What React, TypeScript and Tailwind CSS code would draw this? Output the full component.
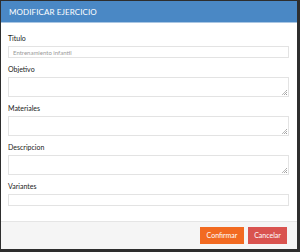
import React from 'react';

const fieldClass =
  'block w-full border border-[#e3e3e3] bg-white rounded-none outline-none text-[6px] text-[#555] px-[4px] placeholder:text-[#999]';

function Grip() {
  return (
    <svg className="absolute right-[2px] bottom-[2px]" width="5" height="5" viewBox="0 0 5 5">
      <rect x="4" y="0" width="1" height="1" fill="#aaa" />
      <rect x="3" y="1" width="1" height="1" fill="#bbb" />
      <rect x="4" y="2" width="1" height="1" fill="#aaa" />
      <rect x="2" y="2" width="1" height="1" fill="#bbb" />
      <rect x="1" y="3" width="1" height="1" fill="#bbb" />
      <rect x="3" y="3" width="1" height="1" fill="#aaa" />
      <rect x="0" y="4" width="1" height="1" fill="#bbb" />
      <rect x="2" y="4" width="1" height="1" fill="#aaa" />
      <rect x="4" y="4" width="1" height="1" fill="#999" />
    </svg>
  );
}

function Field({ label, area, placeholder, first }: { label: string; area?: boolean; placeholder?: string; first?: boolean }) {
  return (
    <div className={first ? '' : 'mt-[7px]'}>
      <label className="block text-[7px] leading-[9px] text-[#222] mb-[3px]">{label}</label>
      {area ? (
        <div className="relative">
          <textarea className={`${fieldClass} h-[20px] resize-none`} />
          <Grip />
        </div>
      ) : (
        <input className={`${fieldClass} h-[12px]`} placeholder={placeholder} />
      )}
    </div>
  );
}

export default function App() {
  return (
    <div className="w-[300px] h-[252px] bg-[#2e2e2e] pt-px pl-px pr-[3px] pb-[3px]" style={{ fontFamily: 'Lato, "Open Sans", sans-serif' }}>
      <div className="flex flex-col h-full bg-white overflow-hidden">
        {/* Header */}
        <div className="h-[22px] shrink-0 bg-[#4a88c5] border-b border-[#a9c6e3] flex items-center px-[8px]">
          <span className="text-[8px] text-white tracking-[0.1px]">MODIFICAR EJERCICIO</span>
        </div>

        {/* Body */}
        <div className="flex-1 overflow-hidden pt-[11px] pl-[7px] pr-[8px]">
          <Field label="Titulo" placeholder="Entrenamiento infantil" first />
          <Field label="Objetivo" area />
          <Field label="Materiales" area />
          <Field label="Descripcion" area />
          <Field label="Variantes" />
        </div>

        {/* Footer */}
        <div className="h-[28px] shrink-0 bg-[#f5f5f5] border-t border-[#e5e5e5] flex items-center justify-end gap-[4px] pr-[10px]">
          <button className="h-[17px] w-[44px] bg-[#f26a21] text-white text-[7px]">Confirmar</button>
          <button className="h-[17px] w-[39px] bg-[#d9534f] text-white text-[7px]">Cancelar</button>
        </div>
      </div>
    </div>
  );
}
